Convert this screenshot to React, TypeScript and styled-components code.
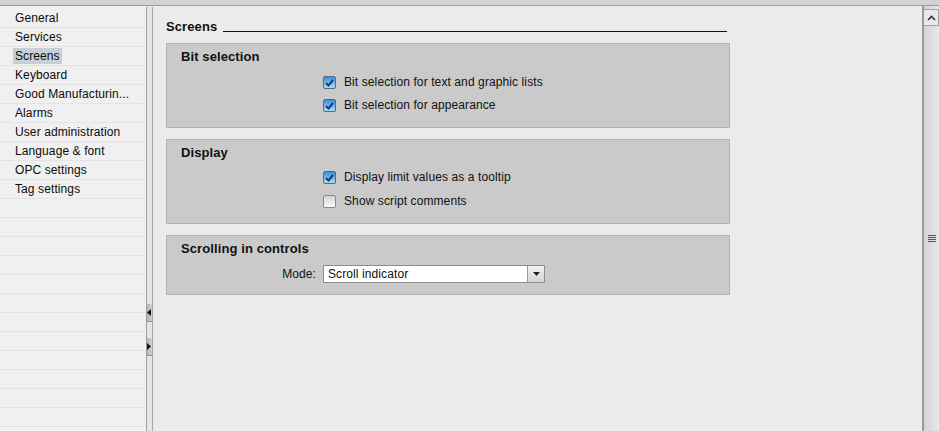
import React from 'react';
import styled, { createGlobalStyle } from 'styled-components';

const GlobalStyle = createGlobalStyle`
  html, body {
    margin: 0;
    padding: 0;
    overflow: hidden;
    background: #ebebeb;
  }
  * {
    box-sizing: border-box;
  }
`;

const Window = styled.div`
  width: 939px;
  height: 431px;
  display: flex;
  flex-direction: column;
  font-family: "Liberation Sans", Arial, sans-serif;
  font-size: 12px;
  letter-spacing: 0.1px;
  color: #111;
`;

const TopStrip = styled.div`
  height: 6px;
  background: #d2d2d2;
  border-bottom: 1px solid #9c9c9c;
  flex-shrink: 0;
`;

const Body = styled.div`
  flex: 1;
  display: flex;
  min-height: 0;
`;

const Nav = styled.nav`
  width: 146px;
  background: #f0f0f0;
  padding-top: 3px;
  overflow: hidden;
  flex-shrink: 0;
`;

const NavRow = styled.div`
  height: 19px;
  border-bottom: 1px solid #e4e4e4;
  padding-left: 13px;
  display: flex;
  align-items: center;
`;

const NavLabel = styled.span<{ selected?: boolean }>`
  display: block;
  padding: 1px 2px;
  white-space: nowrap;
  background: ${({ selected }) => (selected ? '#c7d0d9' : 'transparent')};
  color: #0c0c0c;
`;

const Splitter = styled.div`
  width: 7px;
  flex-shrink: 0;
  margin-top: 1px;
  border-left: 1px solid #9e9e9e;
  border-right: 1px solid #a8a8a8;
  background: #e6e6e6;
  display: flex;
  flex-direction: column;
  padding-top: 297px;
`;

const SplitButton = styled.div`
  height: 18px;
  background: linear-gradient(to right, #b4b4b4, #d2d2d2);
  display: flex;
  align-items: center;
  justify-content: flex-start;
  border-bottom: 1px solid #8e8e8e;
  margin-bottom: 16px;
`;

const Main = styled.main`
  flex: 1;
  background: #ebebeb;
  padding: 11px 0 0 13px;
  display: flex;
  flex-direction: column;
  gap: 11px;
`;

const TitleRow = styled.div`
  width: 561px;
  display: flex;
  align-items: flex-end;
  gap: 6px;
  height: 17px;
  margin-bottom: -2px;
`;

const TitleText = styled.h1`
  margin: 0;
  font-size: 13px;
  font-weight: bold;
  line-height: 15px;
  color: #111;
`;

const TitleRule = styled.div`
  flex: 1;
  border-bottom: 1px solid #111;
  margin-bottom: 2px;
`;

const Section = styled.section<{ $height: number }>`
  width: 564px;
  height: ${({ $height }) => $height}px;
  background: #cacaca;
  border: 1px solid #b3b3b3;
  padding: 5px 0 0 14px;
`;

const SectionHeading = styled.h2<{ $space: number }>`
  margin: 0 0 ${({ $space }) => $space}px;
  font-size: 13px;
  font-weight: bold;
  line-height: 15px;
  color: #111;
`;

const OptionList = styled.div<{ $gap: number }>`
  display: flex;
  flex-direction: column;
  gap: ${({ $gap }) => $gap}px;
  padding-left: 142px;
`;

const OptionRow = styled.label`
  display: flex;
  align-items: center;
  gap: 8px;
  height: 13px;
  line-height: 13px;
`;

const Box = styled.span<{ checked?: boolean }>`
  width: 13px;
  height: 13px;
  flex-shrink: 0;
  border-radius: 2px;
  border: 1px solid ${({ checked }) => (checked ? '#566a80' : '#8a8a8a')};
  background: ${({ checked }) =>
    checked
      ? 'linear-gradient(to bottom, #3b8fd6, #a8ddf6)'
      : 'linear-gradient(to bottom, #d6d6d6, #fafafa)'};
  display: flex;
  align-items: center;
  justify-content: center;
`;

const FieldRow = styled.div`
  display: grid;
  grid-template-columns: 135px 222px;
  column-gap: 7px;
  align-items: center;
`;

const FieldLabel = styled.span`
  text-align: right;
`;

const Combo = styled.div`
  height: 18px;
  background: #fff;
  border: 1px solid #8c8c8c;
  display: flex;
  align-items: center;
`;

const ComboText = styled.span`
  flex: 1;
  padding-left: 4px;
`;

const ComboButton = styled.div`
  width: 17px;
  height: 100%;
  border-left: 1px solid #9a9a9a;
  background: linear-gradient(to bottom, #f2f2f2, #d4d4d4);
  display: flex;
  align-items: center;
  justify-content: center;
`;

const ScrollBar = styled.div`
  width: 17px;
  flex-shrink: 0;
  border-left: 2px solid #9a9a9a;
  background: linear-gradient(to right, #d4d4d4, #e8e8e8);
  display: flex;
  flex-direction: column;
  align-items: stretch;
  padding-top: 3px;
`;

const ScrollUp = styled.div`
  height: 17px;
  background: #e8e8e8;
  border: 1px solid #a0a0a0;
  border-left: none;
  display: flex;
  align-items: center;
  justify-content: center;
`;

const Grip = styled.div`
  margin-top: 209px;
  display: flex;
  flex-direction: column;
  align-items: center;
  gap: 1px;
  span {
    display: block;
    width: 8px;
    height: 1px;
    background: #555;
  }
`;

const Check = () => (
  <svg width="9" height="8" viewBox="0 0 9 8">
    <path d="M1 4 L3.5 6.5 L8 1" fill="none" stroke="#1b3a78" strokeWidth="2" />
  </svg>
);

const navItems = [
  'General',
  'Services',
  'Screens',
  'Keyboard',
  'Good Manufacturin...',
  'Alarms',
  'User administration',
  'Language & font',
  'OPC settings',
  'Tag settings',
];

const Option: React.FC<{ checked?: boolean; label: string }> = ({ checked, label }) => (
  <OptionRow>
    <Box checked={checked}>{checked && <Check />}</Box>
    <span>{label}</span>
  </OptionRow>
);

const App: React.FC = () => {
  const rows = [...navItems, ...Array(13).fill('')];
  return (
    <Window>
      <GlobalStyle />
      <TopStrip />
      <Body>
        <Nav>
          {rows.map((item, i) => (
            <NavRow key={i}>
              {item && <NavLabel selected={item === 'Screens'}>{item}</NavLabel>}
            </NavRow>
          ))}
        </Nav>
        <Splitter>
          <SplitButton>
            <svg width="4" height="7" viewBox="0 0 4 7"><path d="M4 0 L0 3.5 L4 7 Z" fill="#111" /></svg>
          </SplitButton>
          <SplitButton>
            <svg width="4" height="7" viewBox="0 0 4 7"><path d="M0 0 L4 3.5 L0 7 Z" fill="#111" /></svg>
          </SplitButton>
        </Splitter>
        <Main>
          <TitleRow>
            <TitleText>Screens</TitleText>
            <TitleRule />
          </TitleRow>
          <Section $height={85}>
            <SectionHeading $space={12}>Bit selection</SectionHeading>
            <OptionList $gap={10}>
              <Option checked label="Bit selection for text and graphic lists" />
              <Option checked label="Bit selection for appearance" />
            </OptionList>
          </Section>
          <Section $height={85}>
            <SectionHeading $space={11}>Display</SectionHeading>
            <OptionList $gap={11}>
              <Option checked label="Display limit values as a tooltip" />
              <Option label="Show script comments" />
            </OptionList>
          </Section>
          <Section $height={60}>
            <SectionHeading $space={9}>Scrolling in controls</SectionHeading>
            <FieldRow>
              <FieldLabel>Mode:</FieldLabel>
              <Combo>
                <ComboText>Scroll indicator</ComboText>
                <ComboButton>
                  <svg width="7" height="4" viewBox="0 0 7 4"><path d="M0 0 H7 L3.5 4 Z" fill="#222" /></svg>
                </ComboButton>
              </Combo>
            </FieldRow>
          </Section>
        </Main>
        <ScrollBar>
          <ScrollUp>
            <svg width="9" height="6" viewBox="0 0 9 6"><path d="M1 5 L4.5 1.5 L8 5" fill="none" stroke="#333" strokeWidth="1.6" /></svg>
          </ScrollUp>
          <Grip>
            <span /><span /><span /><span />
          </Grip>
        </ScrollBar>
      </Body>
    </Window>
  );
};

export default App;
